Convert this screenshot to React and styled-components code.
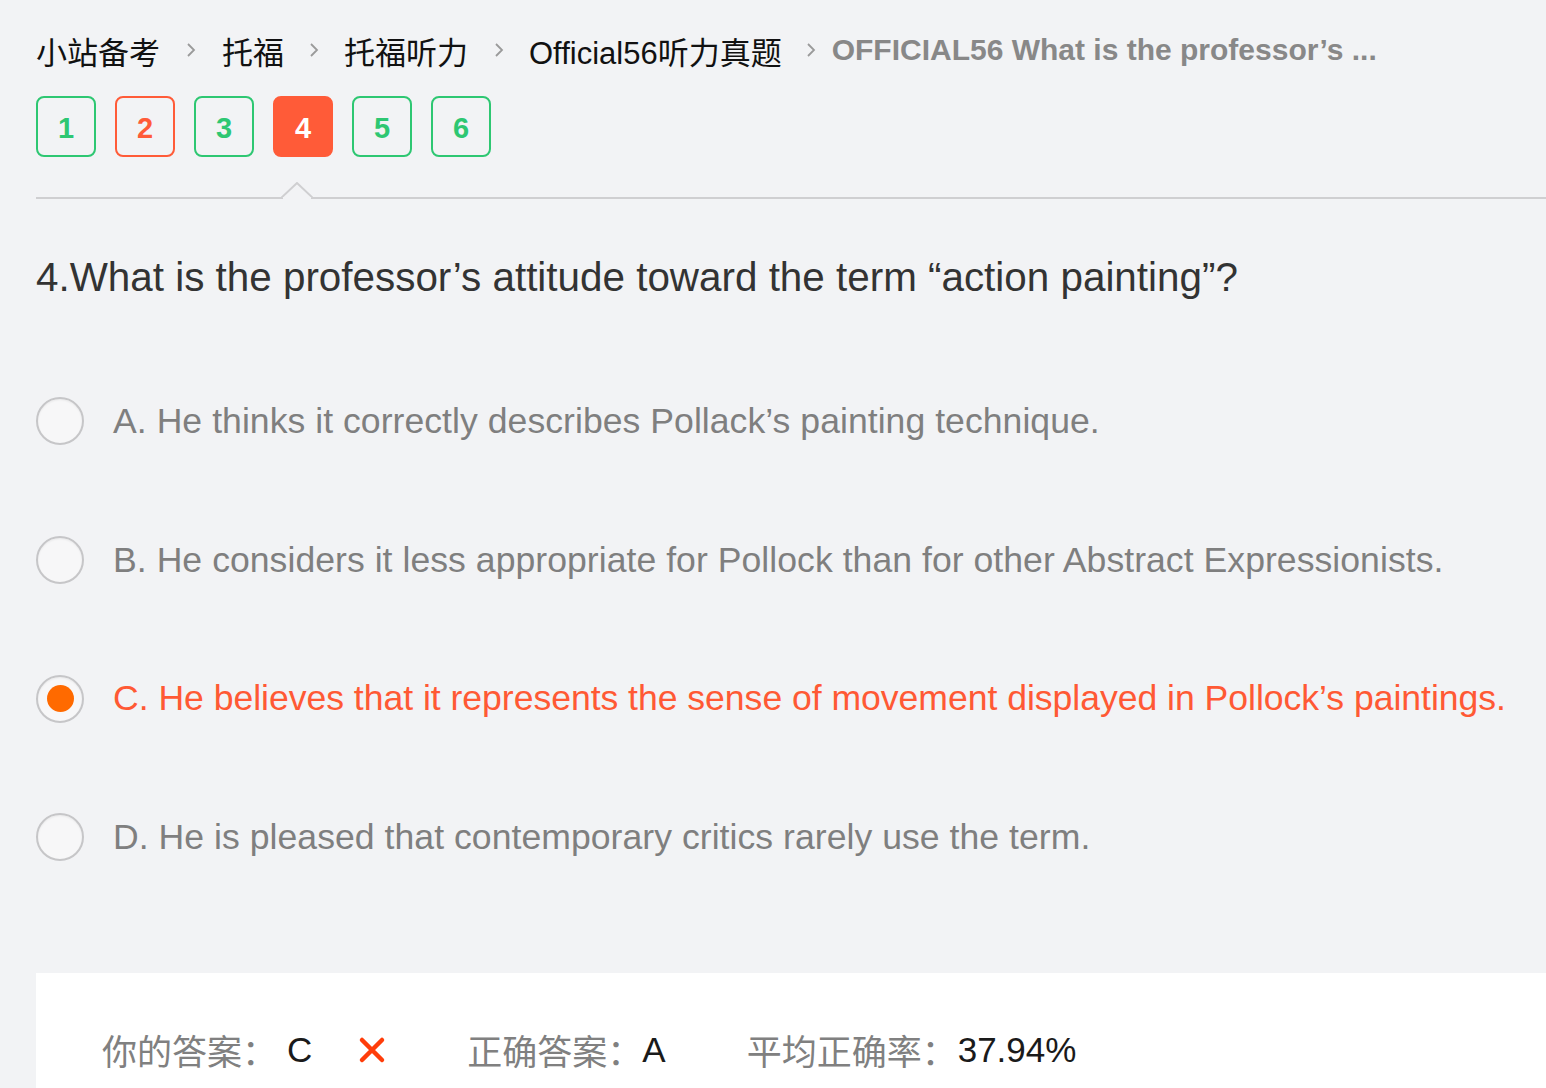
import React from "react";
import styled, { createGlobalStyle } from "styled-components";

const Global = createGlobalStyle`
  html, body { margin: 0; padding: 0; background: #f2f3f5; }
  body { font-family: "Liberation Sans", "Noto Sans CJK SC", sans-serif; overflow: hidden; }
  * { box-sizing: border-box; }
`;

const Page = styled.div`
  width: 1546px;
  height: 1088px;
  padding-left: 36px;
  padding-top: 30px;
  background: #f2f3f5;
  overflow: hidden;
`;

const Crumbs = styled.nav`
  display: flex;
  align-items: center;
  height: 40px;
  color: #111;
  white-space: nowrap;
`;

const Crumb = styled.span`
  color: ${(p) => (p.$current ? "#888" : "#111")};
  font-weight: ${(p) => (p.$current ? 700 : 400)};
  font-size: ${(p) => (p.$current ? "30px" : "31px")};
`;

const Sep = styled.span`
  display: inline-flex;
  align-items: center;
  justify-content: center;
  width: ${(p) => p.$w || 63}px;
  padding-left: ${(p) => p.$pl || 0}px;
  svg { display: block; }
`;

const TabBar = styled.div`
  position: relative;
  margin-top: 26px;
  padding-bottom: 40px;
  border-bottom: 2px solid #cfcfd1;
  display: flex;
  gap: 19px;
`;

const NumBtn = styled.div`
  width: 60px;
  height: 61px;
  border-radius: 8px;
  border: 2px solid ${(p) => p.$color};
  background: ${(p) => (p.$active ? p.$color : "transparent")};
  color: ${(p) => (p.$active ? "#fff" : p.$color)};
  display: flex;
  align-items: center;
  justify-content: center;
  padding-top: 3px;
  font-size: 29px;
  font-weight: 700;
`;

const Notch = styled.div`
  position: absolute;
  left: 245px;
  bottom: -2px;
  width: 32px;
  height: 17px;
  svg { display: block; }
`;

const Question = styled.h2`
  margin: 53px 0 0;
  font-weight: 400;
  font-size: 40.4px;
  line-height: 50px;
  color: #333;
  white-space: nowrap;
`;

const Options = styled.div`
  margin-top: 50px;
  display: flex;
  flex-direction: column;
`;

const OptionRow = styled.div`
  height: 138.7px;
  display: flex;
  align-items: center;
  gap: 29px;
`;

const Radio = styled.span`
  flex: none;
  width: 48px;
  height: 48px;
  border-radius: 50%;
  border: 2px solid #c6c6c8;
  background: #f7f7f8;
  box-shadow: inset 0 1px 2px rgba(0, 0, 0, 0.06);
  display: flex;
  align-items: center;
  justify-content: center;
  &::after {
    content: "";
    width: 27px;
    height: 27px;
    border-radius: 50%;
    background: #ff6a00;
    display: ${(p) => (p.$checked ? "block" : "none")};
  }
`;

const OptionText = styled.span`
  font-size: 35.6px;
  letter-spacing: ${(p) => (p.$checked ? "-0.03px" : "0.04px")};
  color: ${(p) => (p.$checked ? "#ff5934" : "#7f7f7f")};
  white-space: nowrap;
`;

const Panel = styled.div`
  margin-top: 66px;
  background: #fff;
  height: 200px;
  padding: 52px 0 0 66px;
`;

const PanelLine = styled.div`
  display: flex;
  align-items: center;
  height: 50px;
  font-size: 35px;
  white-space: nowrap;
`;

const Label = styled.span`
  color: #808080;
  margin-left: ${(p) => p.$ml || 0}px;
`;

const Value = styled.span`
  color: #1a1a1a;
  margin-left: ${(p) => p.$ml || 0}px;
`;

const Cross = styled.span`
  margin-left: 46px;
  display: inline-flex;
  svg { display: block; }
`;

const Chevron = () => (
  <svg width="10" height="16" viewBox="0 0 10 16">
    <path d="M2 2 L8 8 L2 14" fill="none" stroke="#9a9a9a" strokeWidth="1.8" />
  </svg>
);

const options = [
  { k: "A", t: "He thinks it correctly describes Pollack\u2019s painting technique." },
  { k: "B", t: "He considers it less appropriate for Pollock than for other Abstract Expressionists." },
  { k: "C", t: "He believes that it represents the sense of movement displayed in Pollock\u2019s paintings.", checked: true },
  { k: "D", t: "He is pleased that contemporary critics rarely use the term." },
];

const nums = [
  { n: 1, c: "#2ec772" },
  { n: 2, c: "#ff5b38" },
  { n: 3, c: "#2ec772" },
  { n: 4, c: "#ff5b38", active: true },
  { n: 5, c: "#2ec772" },
  { n: 6, c: "#2ec772" },
];

export default function App() {
  return (
    <>
      <Global />
      <Page>
        <Crumbs>
          <Crumb>小站备考</Crumb>
          <Sep $w={62}><Chevron /></Sep>
          <Crumb>托福</Crumb>
          <Sep $w={60}><Chevron /></Sep>
          <Crumb>托福听力</Crumb>
          <Sep $w={61}><Chevron /></Sep>
          <Crumb>Official56听力真题</Crumb>
          <Sep $w={50} $pl={8}><Chevron /></Sep>
          <Crumb $current>OFFICIAL56 What is the professor’s ...</Crumb>
        </Crumbs>
        <TabBar>
          {nums.map((b) => (
            <NumBtn key={b.n} $color={b.c} $active={b.active}>{b.n}</NumBtn>
          ))}
          <Notch>
            <svg width="32" height="17" viewBox="0 0 32 17">
              <path d="M0 16 L16 1 L32 16" fill="#f2f3f5" stroke="#cfcfd1" strokeWidth="2" />
              <rect x="2" y="15" width="28" height="2" fill="#f2f3f5" />
            </svg>
          </Notch>
        </TabBar>
        <Question>4.What is the professor’s attitude toward the term “action painting”?</Question>
        <Options>
          {options.map((o) => (
            <OptionRow key={o.k}>
              <Radio $checked={o.checked} />
              <OptionText $checked={o.checked}>{o.k}. {o.t}</OptionText>
            </OptionRow>
          ))}
        </Options>
        <Panel>
          <PanelLine>
            <Label>你的答案：</Label>
            <Value $ml={10}>C</Value>
            <Cross>
              <svg width="28" height="28" viewBox="0 0 28 28">
                <path d="M4 4 L24 24 M24 4 L4 24" stroke="#ff3d0a" strokeWidth="4.5" strokeLinecap="round" />
              </svg>
            </Cross>
            <Label $ml={81}>正确答案：</Label>
            <Value>A</Value>
            <Label $ml={81}>平均正确率：</Label>
            <Value $ml={1}>37.94%</Value>
          </PanelLine>
        </Panel>
      </Page>
    </>
  );
}
